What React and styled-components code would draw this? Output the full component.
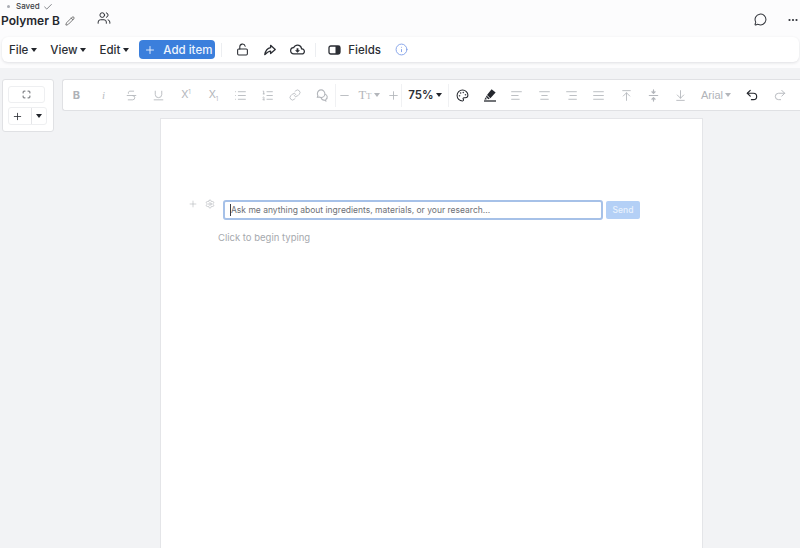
import React from "react";
import styled, { createGlobalStyle } from "styled-components";
import {
  Check, Pencil, Users, MessageCircle, Ellipsis, Plus, LockOpen, Info,
  Strikethrough, Underline, List, ListOrdered, Link,
  Minus, Palette, AlignLeft, AlignCenter, AlignRight, AlignJustify,
  ArrowUpToLine, ArrowDownToLine, Undo2, Redo2, Settings, Maximize
} from "lucide-react";
import { TbShare3 } from "react-icons/tb";
import { MdOutlineCloudDownload } from "react-icons/md";

const Global = createGlobalStyle`
  html, body { margin: 0; padding: 0; height: 100%; }
  body { font-family: Inter, "Noto Sans", sans-serif; background: #f2f3f5; }
  * { box-sizing: border-box; }
`;
const Page = styled.div`
  width: 800px; height: 548px; overflow: hidden; display: flex; flex-direction: column;
  background: #f2f3f5; color: #22252b;
`;
const Header = styled.header`
  height: 68px; background: #fcfcfd; padding: 0 1px 0 2px; display: flex; flex-direction: column; flex: none;
`;
const SavedRow = styled.div`
  height: 13px; display: flex; align-items: center; padding-left: 5px; gap: 3px;
  font-size: 8px; font-weight: 500; color: #3b3e45; line-height: 13px;
`;
const Dot = styled.span`
  width: 3px; height: 3px; border-radius: 50%; background: #a9acb3; margin-right: 3px;
`;
const TitleRow = styled.div`
  height: 24px; display: flex; align-items: flex-start;
`;
const Title = styled.h1`
  margin: 0 0 0 -1px; font-size: 12px; font-weight: 600; color: #24272d; line-height: 16px;
`;
const PencilSlot = styled.span`
  display: flex; margin: 3px 22px 0 5px; color: #444;
`;
const Push = styled.div`flex: 1;`;
const RightIcons = styled.div`display: flex; align-items: center; gap: 20px; color: #33363c;`;
const MenuBar = styled.div`
  height: 25px; background: #fff; border-radius: 6px; display: flex; align-items: center;
  padding-left: 7px; box-shadow: 0 1px 3px rgba(20, 25, 40, 0.12);
`;
const MenuItem = styled.button`
  all: unset; display: flex; align-items: center; gap: 3px; font-size: 11.5px; font-weight: 500;
  color: #2b2e34; margin-right: ${p => p.$mr}px;
`;
const Caret = styled.span`
  width: 0; height: 0; border-left: 3.5px solid transparent; border-right: 3.5px solid transparent;
  border-top: 4px solid ${p => p.$c || "#22252b"}; display: inline-block; flex: none;
`;
const AddButton = styled.button`
  all: unset; box-sizing: border-box; width: 76px; height: 19px; border-radius: 4px; background: #3b7fdc;
  color: #eef4fd; display: flex; align-items: center; gap: 7px; padding-left: 5px;
  font-size: 11.5px; font-weight: 500;
`;
const VRule = styled.span`
  width: 1px; height: 14px; background: #eceef1; margin: 0 ${p => p.$r ?? 0}px 0 ${p => p.$l ?? 0}px; flex: none;
`;
const BarIcon = styled.span`
  display: flex; margin-right: ${p => p.$mr ?? 0}px; color: ${p => p.$c || "#2b2e34"};
`;
const PeopleIcon = styled(BarIcon)`margin-top: -2px;`;
const FieldsLabel = styled.span`font-size: 11.5px; font-weight: 500; color: #2b2e34; margin-right: 14px;`;
const Work = styled.div`
  flex: 1; display: flex; flex-direction: column; padding-top: 11px; min-height: 0;
`;
const TopLine = styled.div`display: flex; align-items: flex-start; padding-left: 2px; gap: 8px; height: 40px;`;
const SidePanel = styled.div`
  width: 52px; height: 53px; background: #fff; border: 1px solid #e0e1e4; border-radius: 3px; flex: none;
  display: flex; flex-direction: column; align-items: flex-start; padding: 6px 0 0 5px; gap: 4px;
  position: relative; z-index: 1;
`;
const ViewBtn = styled.div`
  width: 37px; height: 17px; border: 1px solid #eeeff1; border-radius: 3px; display: flex;
  align-items: center; justify-content: center; color: #33363c;
`;
const SplitBtn = styled.div`
  width: 39px; height: 18px; border: 1px solid #eeeff1; border-radius: 3px; display: flex; align-items: center;
`;
const SplitMain = styled.span`
  width: 23px; height: 100%; display: flex; align-items: center; justify-content: center; color: #2b2e34;
  border-right: 1px solid #e4e5e8; padding-right: 6px;
`;
const SplitArrow = styled.span`flex: 1; display: flex; justify-content: center;`;
const Toolbar = styled.div`
  height: 32px; flex: 1; background: #fff; border: 1px solid #e0e1e4; border-right: none; border-radius: 3px 0 0 3px;
  display: flex; align-items: center; padding-left: 0;
`;
const ToolSlot = styled.span`
  width: ${p => p.$w}px; flex: none; display: flex; align-items: center; justify-content: center; gap: 2px;
  color: ${p => (p.$on ? "#24272d" : "#b3b6bb")};
`;
const BoldGlyph = styled.span`font-size: 11px; font-weight: 700; color: #aeb1b6;`;
const ItalicGlyph = styled.span`font-size: 11px; font-style: italic; color: #b9bcc1; font-family: "Liberation Serif", serif;`;
const ScriptGlyph = styled.span`
  font-size: 10.5px; color: #b3b6bb; line-height: 12px;
  sup, sub { font-size: 6px; line-height: 0; }
`;
const SizeGlyph = styled.span`
  font-family: "Liberation Serif", serif; font-size: 12.5px; color: #b3b6bb; line-height: 12px;
  small { font-size: 9px; }
`;
const Zoomer = styled.span`font-size: 11.5px; font-weight: 600; color: #2b2e34;`;
const FontName = styled.span`font-size: 11px; color: #b0b3b8; font-family: "Liberation Sans", sans-serif;`;
const Sep = styled.span`width: 1px; height: 23px; background: #f0f1f3; flex: none;`;
const PaperWrap = styled.div`flex: 1; display: flex; padding-left: 160px; margin-top: -1px; min-height: 0;`;
const Paper = styled.main`
  width: 543px; height: 440px; background: #fff; border: 1px solid #e4e5e8; border-bottom: none;
  padding: 81px 0 0 27px; flex: none;
`;
const BlockRow = styled.div`display: flex; align-items: flex-start;`;
const Gutter = styled.div`
  width: 35px; display: flex; gap: 7px; color: #b0b3b8; align-items: center; height: 9px; margin-top: -1px; padding-left: 0;
`;
const AskBox = styled.div`
  width: 380px; height: 20px; border: 2px solid #a6c1e8; border-radius: 3px; background: #fff; display: flex; align-items: center;
  padding-left: 5px; font-size: 8.5px; color: #6d7076; white-space: nowrap;
`;
const CaretBar = styled.span`width: 1px; height: 12px; background: #3b3e45; flex: none;`;
const SendBtn = styled.button`
  all: unset; box-sizing: border-box; margin-left: 3px; width: 34px; height: 18px; margin-top: 1px; border-radius: 2px;
  background: #b4d0f6; color: #eaf2fd; font-size: 8.5px; font-weight: 500; display: flex; align-items: center; justify-content: center;
`;
const Placeholder = styled.p`
  margin: 11px 0 0 30px; font-size: 9.5px; color: #a6a9ae; line-height: 14px;
`;

const S = 13;

function Tool({ I, w, on, sw = 1.6, size = S }) {
  return <ToolSlot $w={w} $on={on}><I size={size} strokeWidth={sw} /></ToolSlot>;
}

const PanelGlyph = () => (
  <svg width="13" height="12" viewBox="0 0 13 12">
    <rect x="1" y="2" width="11" height="8" rx="1.8" fill="none" stroke="currentColor" strokeWidth="1.3" />
    <rect x="7.5" y="2" width="4.5" height="8" fill="currentColor" />
  </svg>
);
const BubblesGlyph = ({ size = 13 }) => (
  <svg width={size} height={size} viewBox="0 0 14 14" fill="none" stroke="currentColor" strokeWidth="1.2">
    <path d="M5.5 1a4 4 0 0 0-4 4c0 .8.2 1.4.5 2L1.5 9l2-.4c.6.3 1.2.5 2 .5a4 4 0 0 0 0-8.1Z" />
    <path d="M9.6 5.6a3 3 0 0 1 .9 5.6c-.2.1 0 1.6 0 1.6l-1.6-.9a3 3 0 0 1-3.4-2.6" />
  </svg>
);
const PenGlyph = () => (
  <svg width="14" height="14" viewBox="0 0 14 14">
    <path d="M8.6 1.2 12.6 4.6 7.4 10.2 4 7Z" fill="currentColor" />
    <path d="M3.6 7.6 6.7 10.6 5.4 11.2 3 9Z" fill="currentColor" />
    <path d="M1 13h12" stroke="currentColor" strokeWidth="1.3" />
    <path d="M3 9 1.4 11.4 3.6 11.6Z" fill="currentColor" />
  </svg>
);
const MiddleGlyph = ({ size = 13 }) => (
  <svg width={size} height={size} viewBox="0 0 14 14" fill="none" stroke="currentColor" strokeWidth="1.3" strokeLinecap="round" strokeLinejoin="round">
    <path d="M7 1v3.4M5.3 3 7 4.6 8.7 3M2.5 7h9M7 13V9.6M5.3 11 7 9.4 8.7 11" />
  </svg>
);

export default function App() {
  return (
    <Page>
      <Global />
      <Header>
        <SavedRow><Dot />Saved<Check size={10} strokeWidth={1.5} /></SavedRow>
        <TitleRow>
          <Title>Polymer B</Title>
          <PencilSlot><Pencil size={10} strokeWidth={1.7} /></PencilSlot>
          <PeopleIcon><Users size={14} strokeWidth={1.7} /></PeopleIcon>
          <Push />
          <RightIcons>
            <MessageCircle size={13} strokeWidth={1.9} />
            <Ellipsis size={12} strokeWidth={2.4} />
          </RightIcons>
        </TitleRow>
        <MenuBar>
          <MenuItem $mr={13}>File<Caret /></MenuItem>
          <MenuItem $mr={13}>View<Caret /></MenuItem>
          <MenuItem $mr={10}>Edit<Caret /></MenuItem>
          <AddButton><Plus size={12} strokeWidth={1.8} />Add item</AddButton>
          <VRule $l={6} $r={14} />
          <BarIcon $mr={14}><LockOpen size={13} strokeWidth={2} /></BarIcon>
          <BarIcon $mr={13}><TbShare3 size={14} strokeWidth={2.2} /></BarIcon>
          <BarIcon><MdOutlineCloudDownload size={15} /></BarIcon>
          <VRule $l={10} $r={12} />
          <BarIcon $mr={7}><PanelGlyph /></BarIcon>
          <FieldsLabel>Fields</FieldsLabel>
          <BarIcon $c="#7f9fe8"><Info size={13} strokeWidth={1.7} /></BarIcon>
        </MenuBar>
      </Header>
      <Work>
        <TopLine>
          <SidePanel>
            <ViewBtn><Maximize size={9} strokeWidth={2} /></ViewBtn>
            <SplitBtn>
              <SplitMain><Plus size={11} strokeWidth={1.8} /></SplitMain>
              <SplitArrow><Caret /></SplitArrow>
            </SplitBtn>
          </SidePanel>
          <Toolbar>
            <ToolSlot $w={27}><BoldGlyph>B</BoldGlyph></ToolSlot>
            <ToolSlot $w={27}><ItalicGlyph>i</ItalicGlyph></ToolSlot>
            <Tool I={Strikethrough} w={28} />
            <Tool I={Underline} w={27} />
            <ToolSlot $w={28}><ScriptGlyph>X<sup>1</sup></ScriptGlyph></ToolSlot>
            <ToolSlot $w={27}><ScriptGlyph>X<sub>1</sub></ScriptGlyph></ToolSlot>
            <Tool I={List} w={27} />
            <Tool I={ListOrdered} w={27} />
            <Tool I={Link} w={28} size={12} />
            <ToolSlot $w={26}><BubblesGlyph /></ToolSlot>
            <Sep />
            <Tool I={Minus} w={16} />
            <ToolSlot $w={34}><SizeGlyph>T<small>T</small></SizeGlyph><Caret $c="#b3b6bb" /></ToolSlot>
            <Tool I={Plus} w={15} />
            <Sep />
            <ToolSlot $w={46} $on><Zoomer>75%</Zoomer><Caret /></ToolSlot>
            <Sep />
            <Tool I={Palette} w={27} on sw={1.9} />
            <ToolSlot $w={27} $on><PenGlyph /></ToolSlot>
            <Tool I={AlignLeft} w={27} />
            <Tool I={AlignCenter} w={28} />
            <Tool I={AlignRight} w={27} />
            <Tool I={AlignJustify} w={27} />
            <Tool I={ArrowUpToLine} w={28} />
            <ToolSlot $w={27}><MiddleGlyph /></ToolSlot>
            <Tool I={ArrowDownToLine} w={27} />
            <ToolSlot $w={44}><FontName>Arial</FontName><Caret $c="#b3b6bb" /></ToolSlot>
            <Tool I={Undo2} w={28} on sw={2} size={14} />
            <Tool I={Redo2} w={28} sw={1.6} size={14} />
          </Toolbar>
        </TopLine>
        <PaperWrap>
          <Paper>
            <BlockRow>
              <Gutter><Plus size={10} strokeWidth={1.4} /><Settings size={10} strokeWidth={1.5} /></Gutter>
              <AskBox><CaretBar />Ask me anything about ingredients, materials, or your research...</AskBox>
              <SendBtn>Send</SendBtn>
            </BlockRow>
            <Placeholder>Click to begin typing</Placeholder>
          </Paper>
        </PaperWrap>
      </Work>
    </Page>
  );
}
